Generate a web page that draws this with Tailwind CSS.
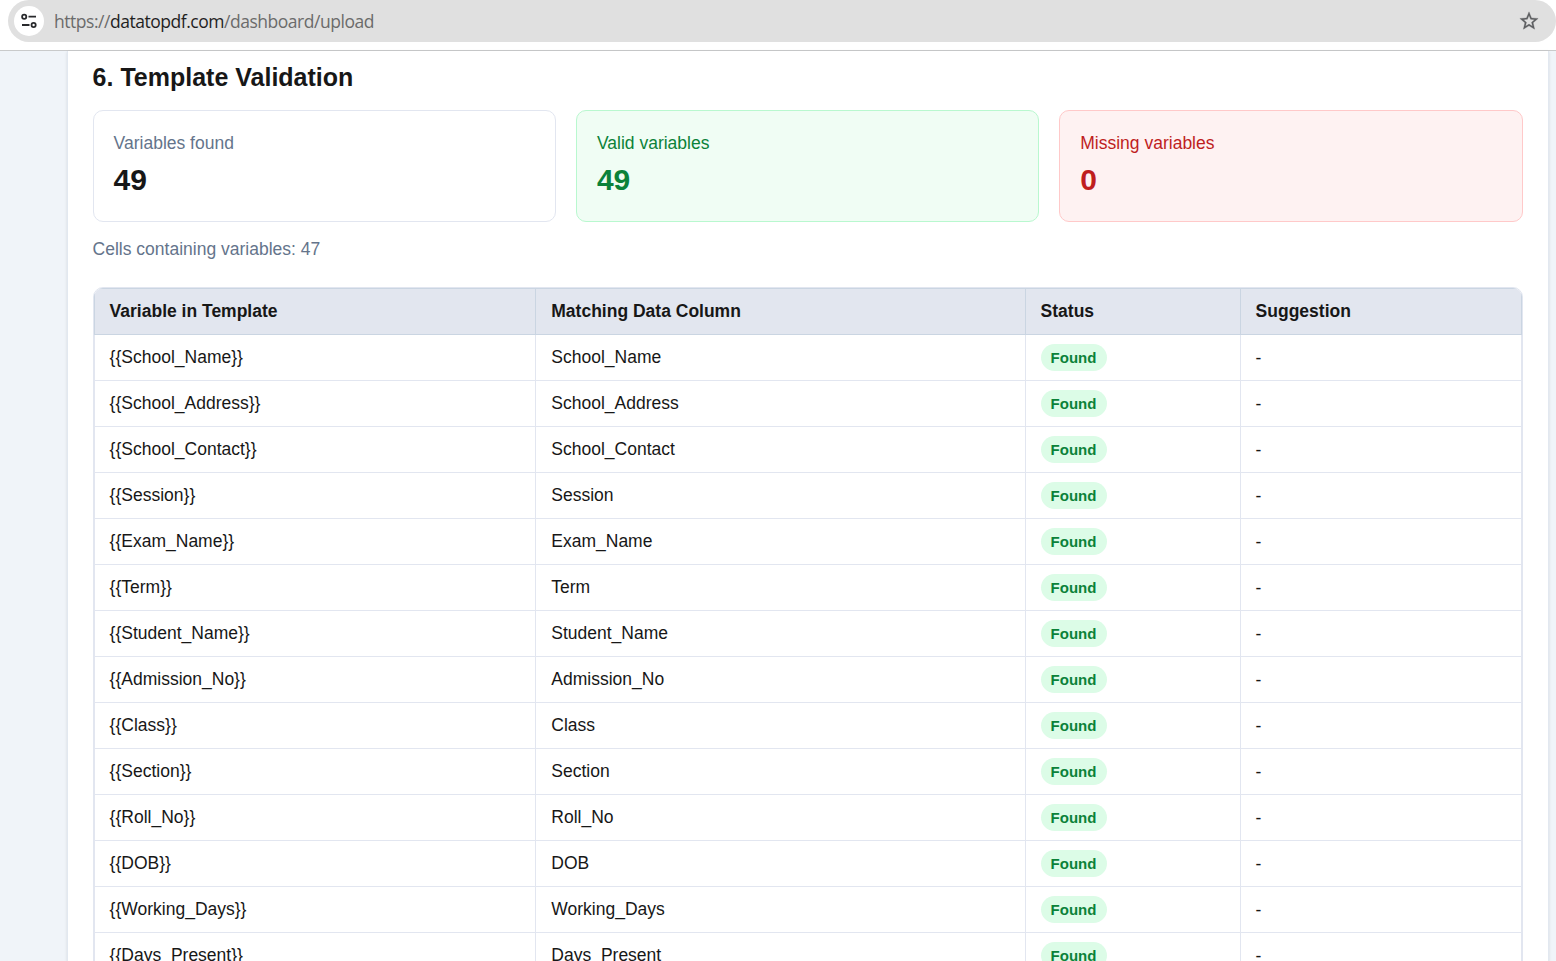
<!DOCTYPE html>
<html lang="en">
<head>
    <meta charset="UTF-8">
    <meta name="viewport" content="width=device-width, initial-scale=1.0">
    <title>Template Validation</title>
    <script src="https://cdn.jsdelivr.net/npm/@tailwindcss/browser@4"></script>
</head>
<body class="h-screen overflow-hidden flex flex-col bg-[#f0f4f9] font-['Liberation_Sans',Arial,sans-serif] text-[17.5px] text-[#171717]">

    <!-- Address bar -->
    <header class="h-[51px] shrink-0 bg-white border-b border-[#c9cacb] pl-2">
        <div class="flex items-center h-[42px] bg-[#e0e0e0] rounded-full pl-1.5 pr-[16.5px]">
            <span class="flex items-center justify-center size-[30px] rounded-full bg-white">
                <svg class="size-[18px]" viewBox="0 0 18 18" fill="none" stroke="#28292c" stroke-width="1.8">
                    <circle cx="4.2" cy="4.700" r="2.100"/>
                    <path d="M8.500 4.700h7.500M2 13h7.500"/>
                    <circle cx="13.600" cy="13" r="2.100"/>
                </svg>
            </span>
            <span class="ml-2.5 text-[17.5px] tracking-[-0.47px] font-['Open_Sans','Noto_Sans',sans-serif] text-[#6b6b6b]">https://<span class="text-[#1f1f1f]">datatopdf.com</span>/dashboard/upload</span>
            <svg class="ml-auto size-[22px]" viewBox="0 0 24 24" fill="#5c5e60" stroke="#5c5e60" stroke-width="0.3">
                <path d="M22 9.240l-7.190-.62L12 2 9.190 8.630 2 9.240l5.460 4.730L5.820 21 12 17.270 18.180 21l-1.630-7.030L22 9.240zM12 15.400l-3.760 2.270 1-4.280-3.320-2.880 4.380-.38L12 6.100l1.710 4.040 4.380.38-3.320 2.880 1 4.280L12 15.400z"/>
            </svg>
        </div>
    </header>

    <main class="flex-1 min-h-0 ml-[67px] mr-[7px] bg-white border-x border-[#e2e8f0] pl-[24.6px] pr-[25.4px] pt-[9px] shadow-sm">
        <h2 class="text-[25px] leading-[35px] font-bold">6. Template Validation</h2>

        <div class="mt-[15px] grid grid-cols-3 gap-5">
            <div class="h-28 rounded-[10px] border border-[#e2e6f0] p-5">
                <p class="leading-[25px] text-[#64748b]">Variables found</p>
                <p class="mt-1 text-[30px] leading-10 font-bold">49</p>
            </div>
            <div class="h-28 rounded-[10px] border border-[#b9f8cf] bg-[#f0fdf4] p-5 text-[#0b8239]">
                <p class="leading-[25px]">Valid variables</p>
                <p class="mt-1 text-[30px] leading-10 font-bold">49</p>
            </div>
            <div class="h-28 rounded-[10px] border border-[#ffc9c9] bg-[#fef2f2] p-5 text-[#bf1e1e]">
                <p class="leading-[25px]">Missing variables</p>
                <p class="mt-1 text-[30px] leading-10 font-bold">0</p>
            </div>
        </div>

        <p class="mt-[15px] leading-[25px] text-[#64748b]">Cells containing variables: 47</p>

        <div class="mt-[25px] rounded-t-[10px] border border-[#e2e6f0] overflow-hidden">
            <table class="w-full table-fixed border-separate border-spacing-0 text-left">
                <colgroup>
                    <col class="w-[442px]">
                    <col class="w-[490px]">
                    <col class="w-[215px]">
                    <col class="w-[281px]">
                </colgroup>
                <thead>
                    <tr class="h-[47px] bg-[#e2e6ef]">
                        <th class="border border-[#cad5e2] px-[15px] py-0">Variable in Template</th>
                        <th class="border-y border-r border-[#cad5e2] px-[15.7px] py-0">Matching Data Column</th>
                        <th class="border-y border-r border-[#cad5e2] px-[15px] py-0">Status</th>
                        <th class="border-y border-r border-[#cad5e2] px-[15px] py-0">Suggestion</th>
                    </tr>
                </thead>
                <tbody id="variableRows"></tbody>
            </table>
        </div>
    </main>

    <script>
        const variables = [
            'School_Name', 'School_Address', 'School_Contact', 'Session', 'Exam_Name',
            'Term', 'Student_Name', 'Admission_No', 'Class', 'Section', 'Roll_No',
            'DOB', 'Working_Days', 'Days_Present'
        ];

        document.getElementById('variableRows').innerHTML = variables.map((name) => `
            <tr class="h-[46px]">
                <td class="border-x border-b border-[#e2e6f0] px-[15px] py-0">{{${name}}}</td>
                <td class="border-r border-b border-[#e2e6f0] px-[15.7px] py-0">${name}</td>
                <td class="border-r border-b border-[#e2e6f0] px-[15px] py-0">
                    <span class="flex items-center w-[66px] h-[27px] rounded-full bg-[#dcfce7] px-2.5 pt-0.5 text-[15px] font-bold text-[#0b8239]">Found</span>
                </td>
                <td class="border-r border-b border-[#e2e6f0] px-[15px] pt-0.5 pb-0">-</td>
            </tr>
        `).join('');
    </script>

</body>
</html>
